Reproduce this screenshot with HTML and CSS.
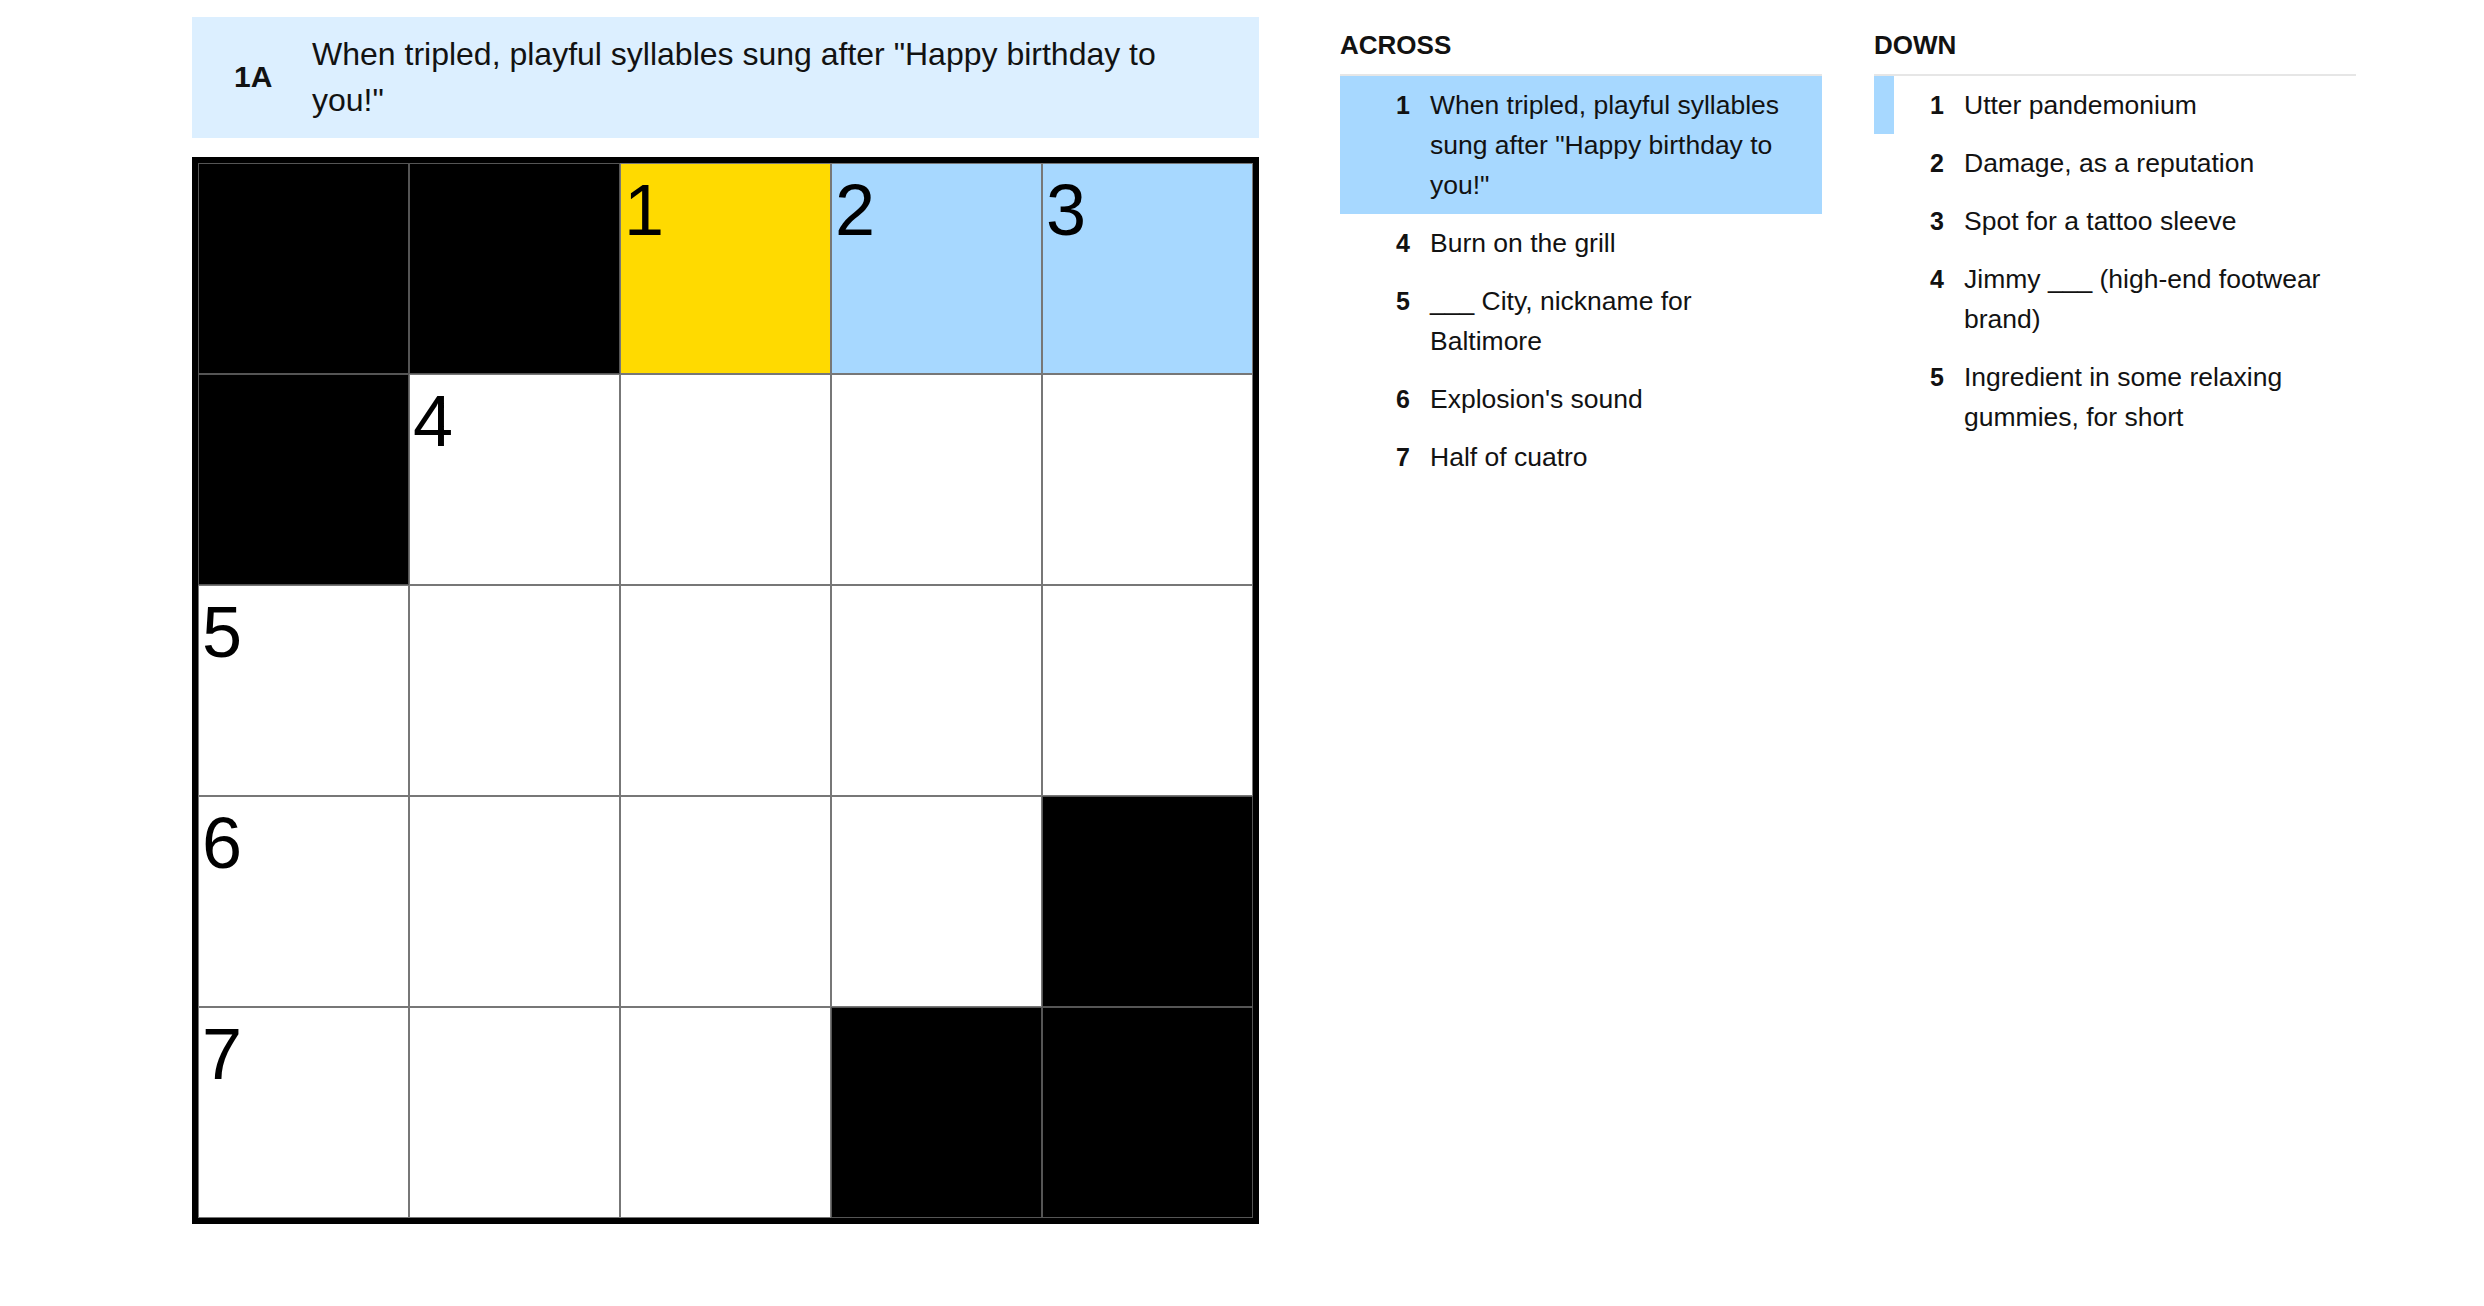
FILE: index.html
```html
<!DOCTYPE html>
<html lang="en">
<head>
    <meta charset="UTF-8">
    <title>The Mini Crossword</title>
    <link rel="stylesheet" href="styles.css">
</head>
<body>
    <div class="page">
        <section class="board">
            <div class="clue-bar">
                <span class="clue-bar-label">1A</span>
                <span class="clue-bar-text">When tripled, playful syllables sung after "Happy birthday to you!"</span>
            </div>

            <div class="grid">
                <div class="cell block"></div>
                <div class="cell block"></div>
                <div class="cell selected"><span class="num">1</span></div>
                <div class="cell word"><span class="num">2</span></div>
                <div class="cell word"><span class="num">3</span></div>

                <div class="cell block"></div>
                <div class="cell"><span class="num">4</span></div>
                <div class="cell"></div>
                <div class="cell"></div>
                <div class="cell"></div>

                <div class="cell"><span class="num">5</span></div>
                <div class="cell"></div>
                <div class="cell"></div>
                <div class="cell"></div>
                <div class="cell"></div>

                <div class="cell"><span class="num">6</span></div>
                <div class="cell"></div>
                <div class="cell"></div>
                <div class="cell"></div>
                <div class="cell block"></div>

                <div class="cell"><span class="num">7</span></div>
                <div class="cell"></div>
                <div class="cell"></div>
                <div class="cell block"></div>
                <div class="cell block"></div>
            </div>
        </section>

        <section class="clues">
            <div class="clue-list">
                <h3 class="clue-title">Across</h3>
                <ol>
                    <li class="clue active"><span class="clue-num">1</span><span class="clue-text">When tripled, playful syllables sung after "Happy birthday to you!"</span></li>
                    <li class="clue"><span class="clue-num">4</span><span class="clue-text">Burn on the grill</span></li>
                    <li class="clue"><span class="clue-num">5</span><span class="clue-text">___ City, nickname for Baltimore</span></li>
                    <li class="clue"><span class="clue-num">6</span><span class="clue-text">Explosion's sound</span></li>
                    <li class="clue"><span class="clue-num">7</span><span class="clue-text">Half of cuatro</span></li>
                </ol>
            </div>

            <div class="clue-list">
                <h3 class="clue-title">Down</h3>
                <ol>
                    <li class="clue related"><span class="clue-num">1</span><span class="clue-text">Utter pandemonium</span></li>
                    <li class="clue"><span class="clue-num">2</span><span class="clue-text">Damage, as a reputation</span></li>
                    <li class="clue"><span class="clue-num">3</span><span class="clue-text">Spot for a tattoo sleeve</span></li>
                    <li class="clue"><span class="clue-num">4</span><span class="clue-text">Jimmy ___ (high-end footwear brand)</span></li>
                    <li class="clue"><span class="clue-num">5</span><span class="clue-text">Ingredient in some relaxing gummies, for short</span></li>
                </ol>
            </div>
        </section>
    </div>
</body>
</html>
```

FILE: styles.css
```css
body {
    margin: 0;
    background-color: #fff;
    color: #121212;
    font-family: "Liberation Sans", Arial, sans-serif;
}

.page {
    display: flex;
    align-items: flex-start;
    padding: 17px 0 0 192px;
}

.board {
    width: 1067px;
    flex: none;
}

.clue-bar {
    display: flex;
    align-items: center;
    background-color: #dcefff;
    padding: 14px 57px 15px 42px;
    margin-bottom: 19px;
}

.clue-bar-label {
    width: 78px;
    flex: none;
    font-size: 30px;
    font-weight: bold;
}

.clue-bar-text {
    font-size: 32px;
    line-height: 46px;
}

.grid {
    display: grid;
    grid-template-columns: repeat(5, 211px);
    grid-template-rows: repeat(5, 211px);
    border: 6px solid #000;
    background-color: #000;
}

.cell {
    box-sizing: border-box;
    border: 1px solid #777;
    background-color: #fff;
    padding: 5px 0 0 3px;
}

.cell.block {
    background-color: #000;
    border-color: #555;
}

.cell.selected {
    background-color: #ffda00;
}

.cell.word {
    background-color: #a7d8ff;
}

.num {
    display: block;
    font-size: 72px;
    line-height: normal;
    color: #000;
}

.clues {
    display: flex;
    gap: 52px;
    margin-left: 81px;
}

.clue-list {
    width: 482px;
}

.clue-title {
    margin: 0;
    padding: 13px 0 14px;
    line-height: 30px;
    font-size: 26px;
    font-weight: bold;
    text-transform: uppercase;
    border-bottom: 2px solid #e6e6e6;
}

.clue-list ol {
    list-style: none;
    margin: 0;
    padding: 0;
}

.clue {
    display: flex;
    align-items: flex-start;
    padding: 9px 20px 9px 0;
    border-left: 20px solid transparent;
    line-height: 40px;
}

.clue.active {
    background-color: #a7d8ff;
    border-left-color: #a7d8ff;
}

.clue.related {
    border-left-color: #a7d8ff;
}

.clue-num {
    width: 50px;
    flex: none;
    margin-right: 20px;
    text-align: right;
    font-size: 25px;
    font-weight: bold;
}

.clue-text {
    font-size: 26.5px;
}
```
